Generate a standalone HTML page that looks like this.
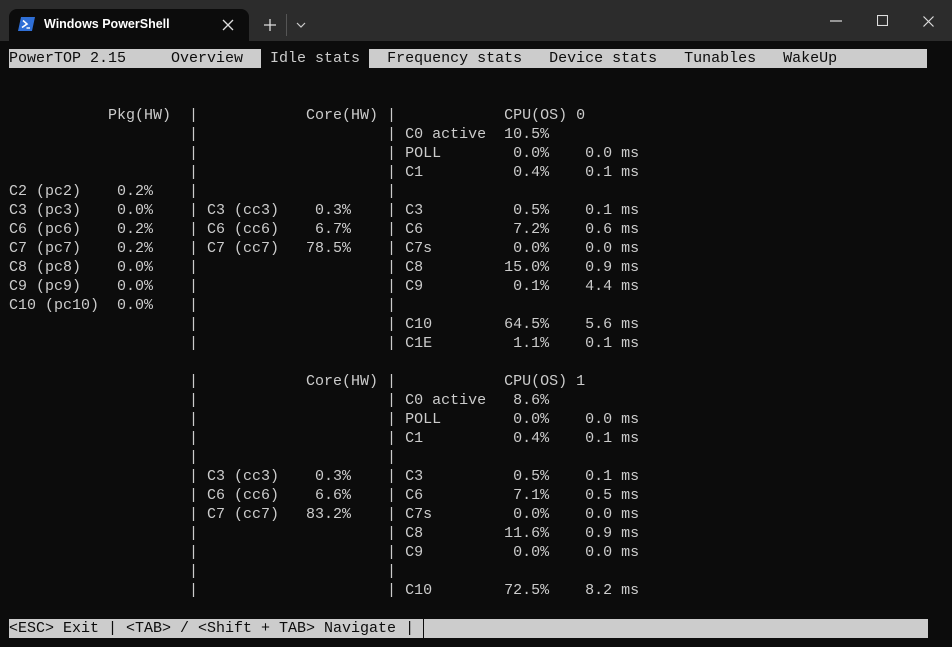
<!DOCTYPE html>
<html><head><meta charset="utf-8"><style>
html,body{margin:0;padding:0;background:#0c0c0c;width:952px;height:647px;overflow:hidden}
.title{position:absolute;left:0;top:0;width:952px;height:41px;background:#2c2c2c}
.tab{position:absolute;left:9px;top:9px;width:240px;height:32px;background:#0c0c0c;border-radius:8px 8px 0 0}
.tabtxt{position:absolute;left:44px;top:17px;font:600 12.5px "Liberation Sans",sans-serif;color:#fff}
pre{position:absolute;left:9px;top:49px;margin:0;font:15px/19px "Liberation Mono",monospace;color:#cccccc}
.bar{background:#cccccc;color:#0c0c0c;padding:1px 0}
.sel{background:#0c0c0c;color:#cccccc;padding:1px 0}
.cur{display:inline-block;width:1px;height:19px;background:#0c0c0c;vertical-align:top}
</style></head><body>
<div class="title">
<div class="tab"></div>
<svg style="position:absolute;left:18px;top:17px" width="17" height="14" viewBox="0 0 17 14"><path d="M3 0H17L14 14H0Z" fill="#2f6fd6"/><path d="M5 3.5L9 7L4 10.5" stroke="#fff" stroke-width="1.6" fill="none"/><path d="M8.5 11H12" stroke="#fff" stroke-width="1.4"/></svg>
<div class="tabtxt">Windows PowerShell</div>
<svg style="position:absolute;left:222px;top:19px" width="12" height="12"><path d="M1 1L11 11M11 1L1 11" stroke="#ddd" stroke-width="1.3"/></svg>
<svg style="position:absolute;left:264px;top:19px" width="12" height="12"><path d="M6 0V12M0 6H12" stroke="#ddd" stroke-width="1.3"/></svg>
<div style="position:absolute;left:286px;top:14px;width:1px;height:22px;background:#555"></div>
<svg style="position:absolute;left:296px;top:22px" width="10" height="6"><path d="M1 1L5 5L9 1" stroke="#ccc" stroke-width="1.2" fill="none"/></svg>
<svg style="position:absolute;left:830px;top:20px" width="12" height="2"><path d="M0 1H12" stroke="#ddd" stroke-width="1.2"/></svg>
<svg style="position:absolute;left:877px;top:15px" width="11" height="11"><rect x="0.5" y="0.5" width="10" height="10" fill="none" stroke="#ddd" stroke-width="1.1"/></svg>
<svg style="position:absolute;left:923px;top:16px" width="11" height="11"><path d="M0.5 0.5L10.5 10.5M10.5 0.5L0.5 10.5" stroke="#ddd" stroke-width="1.2"/></svg>
</div>
<pre><span class="bar">PowerTOP 2.15     Overview  </span><span class="sel"> Idle stats </span><span class="bar">  Frequency stats   Device stats   Tunables   WakeUp          </span>


           Pkg(HW)  |            Core(HW) |            CPU(OS) 0
                    |                     | C0 active  10.5%
                    |                     | POLL        0.0%    0.0 ms
                    |                     | C1          0.4%    0.1 ms
C2 (pc2)    0.2%    |                     |
C3 (pc3)    0.0%    | C3 (cc3)    0.3%    | C3          0.5%    0.1 ms
C6 (pc6)    0.2%    | C6 (cc6)    6.7%    | C6          7.2%    0.6 ms
C7 (pc7)    0.2%    | C7 (cc7)   78.5%    | C7s         0.0%    0.0 ms
C8 (pc8)    0.0%    |                     | C8         15.0%    0.9 ms
C9 (pc9)    0.0%    |                     | C9          0.1%    4.4 ms
C10 (pc10)  0.0%    |                     |
                    |                     | C10        64.5%    5.6 ms
                    |                     | C1E         1.1%    0.1 ms

                    |            Core(HW) |            CPU(OS) 1
                    |                     | C0 active   8.6%
                    |                     | POLL        0.0%    0.0 ms
                    |                     | C1          0.4%    0.1 ms
                    |                     |
                    | C3 (cc3)    0.3%    | C3          0.5%    0.1 ms
                    | C6 (cc6)    6.6%    | C6          7.1%    0.5 ms
                    | C7 (cc7)   83.2%    | C7s         0.0%    0.0 ms
                    |                     | C8         11.6%    0.9 ms
                    |                     | C9          0.0%    0.0 ms
                    |                     |
                    |                     | C10        72.5%    8.2 ms

<span class="bar">&lt;ESC&gt; Exit | &lt;TAB&gt; / &lt;Shift + TAB&gt; Navigate | <span class="cur"></span>                                                        </span></pre>
</body></html>
